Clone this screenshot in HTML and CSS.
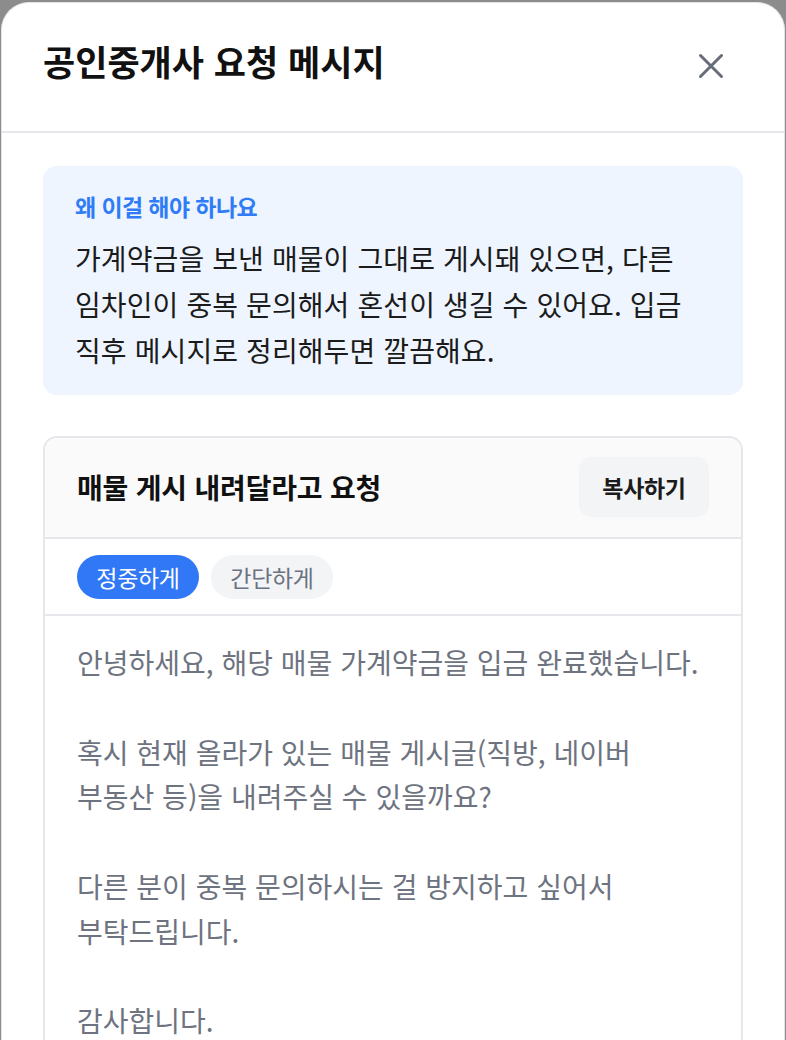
FILE: index.html
```html
<!DOCTYPE html>
<html lang="ko">
<head>
<meta charset="utf-8">
<title>공인중개사 요청 메시지</title>
<link rel="stylesheet" href="styles.css">
</head>
<body>
<div class="sheet">
  <header class="sheet-header">
    <h1 class="sheet-title">공인중개사 요청 메시지</h1>
    <button class="close-btn" aria-label="닫기">
      <svg width="26" height="26" viewBox="0 0 26 26" fill="none" stroke="currentColor" stroke-width="3" stroke-linecap="round">
        <path d="M2.5 2.5 L23.5 23.5 M23.5 2.5 L2.5 23.5"/>
      </svg>
    </button>
  </header>
  <main class="sheet-body">
    <section class="info-box">
      <p class="info-label">왜 이걸 해야 하나요</p>
      <p class="info-text">가계약금을 보낸 매물이 그대로 게시돼 있으면, 다른 임차인이 중복 문의해서 혼선이 생길 수 있어요. 입금 직후 메시지로 정리해두면 깔끔해요.</p>
    </section>
    <section class="msg-card">
      <div class="msg-head">
        <h2 class="msg-title">매물 게시 내려달라고 요청</h2>
        <button class="copy-btn">복사하기</button>
      </div>
      <div class="tone-row">
        <button class="tone tone-active">정중하게</button>
        <button class="tone">간단하게</button>
      </div>
      <div class="msg-text">안녕하세요, 해당 매물 가계약금을 입금 완료했습니다.

혹시 현재 올라가 있는 매물 게시글(직방, 네이버
부동산 등)을 내려주실 수 있을까요?

다른 분이 중복 문의하시는 걸 방지하고 싶어서
부탁드립니다.

감사합니다.</div>
    </section>
  </main>
</div>
</body>
</html>
```

FILE: styles.css
```css
* { box-sizing: border-box; }
html, body { margin: 0; padding: 0; }
body {
  background: #8c8c8c;
  font-family: "Noto Sans CJK KR", "Noto Sans", sans-serif;
  height: 1040px;
  overflow: hidden;
}
.sheet {
  margin: 2px 1px 0 1px;
  height: 1100px;
  background: #ffffff;
  border: 1px solid #e3e4e8;
  border-bottom: none;
  border-radius: 28px 28px 0 0;
}
.sheet-header {
  height: 130px;
  display: flex;
  align-items: center;
  justify-content: space-between;
  padding: 0 60px 14px 41px;
  border-bottom: 2px solid #e6e7eb;
}
.sheet-title {
  margin: 0;
  font-size: 35px;
  font-weight: 700;
  color: #111111;
  letter-spacing: 0;
}
.close-btn {
  border: none;
  background: none;
  padding: 0;
  color: #666c78;
  display: flex;
  margin-top: 12px;
}
.sheet-body {
  padding: 33px 41px 0 41px;
}
.info-box {
  background: #eef5ff;
  border-radius: 14px;
  padding: 24px 32px 22px;
  word-break: keep-all;
}
.info-label {
  margin: 0 0 13px 0;
  font-size: 23px;
  line-height: 32px;
  font-weight: 600;
  color: #2f7cf6;
  letter-spacing: -0.6px;
}
.info-text {
  margin: 0;
  font-size: 28px;
  line-height: 46px;
  color: #1b1b1b;
  letter-spacing: 0.1px;
}
.msg-card {
  margin-top: 41px;
  border: 2px solid #e6e7eb;
  border-radius: 14px;
  overflow: hidden;
}
.msg-head {
  background: #fafafb;
  display: flex;
  align-items: center;
  justify-content: space-between;
  padding: 19px 32px 20px 32px;
  border-bottom: 2px solid #e6e7eb;
}
.msg-title {
  margin: 0;
  font-size: 28px;
  font-weight: 700;
  color: #111111;
  letter-spacing: -0.2px;
}
.copy-btn {
  border: none;
  background: #f3f4f6;
  border-radius: 12px;
  width: 130px;
  height: 60px;
  font-family: inherit;
  font-size: 23px;
  font-weight: 600;
  color: #1b1b1b;
  letter-spacing: -0.3px;
}
.tone-row {
  display: flex;
  gap: 12px;
  padding: 16px 32px 15px 32px;
  border-bottom: 2px solid #e6e7eb;
}
.tone {
  border: none;
  height: 44px;
  width: 122px;
  padding: 0;
  border-radius: 22px;
  background: #f3f4f6;
  color: #6b7280;
  font-family: inherit;
  font-size: 23px;
  font-weight: 400;
  letter-spacing: -0.3px;
}
.tone-active {
  background: #3178f6;
  color: #ffffff;
}
.msg-text {
  white-space: pre-wrap;
  word-break: keep-all;
  padding: 24px 32px 40px;
  font-size: 28px;
  line-height: 44.8px;
  color: #6e7380;
  letter-spacing: 0;
}
```
